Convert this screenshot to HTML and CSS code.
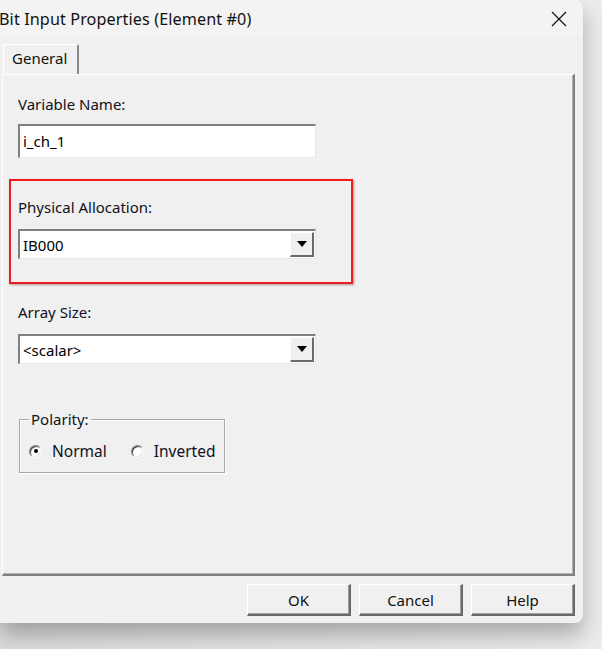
FILE: index.html
```html
<!DOCTYPE html>
<html>
<head>
<meta charset="utf-8">
<link rel="stylesheet" href="styles.css">
</head>
<body>
<div class="window">
  <div class="titlebar">
    <span class="title">Bit Input Properties (Element #0)</span>
    <svg class="close" width="16" height="16" viewBox="0 0 16 16"><path d="M1 1 L15 15 M15 1 L1 15" stroke="#111" stroke-width="1.2" fill="none"/></svg>
  </div>
  <div class="tabs">
    <div class="tab">General</div>
  </div>
  <div class="panel">
    <div class="label l1">Variable Name:</div>
    <div class="edit">i_ch_1</div>
    <div class="label l2">Physical Allocation:</div>
    <div class="combo"><span class="val">IB000</span><span class="arrow"><svg width="10" height="6" viewBox="0 0 10 6"><path d="M0 0 H10 L5 6 Z" fill="#000"/></svg></span></div>
    <div class="label l3">Array Size:</div>
    <div class="combo"><span class="val">&lt;scalar&gt;</span><span class="arrow"><svg width="10" height="6" viewBox="0 0 10 6"><path d="M0 0 H10 L5 6 Z" fill="#000"/></svg></span></div>
    <fieldset class="group">
      <legend>Polarity:</legend>
      <div class="radios">
        <label class="radio"><span class="circle checked"></span>Normal</label>
        <label class="radio"><span class="circle"></span>Inverted</label>
      </div>
    </fieldset>
    <div class="highlight"></div>
  </div>
  <div class="buttons">
    <div class="btn">OK</div>
    <div class="btn">Cancel</div>
    <div class="btn">Help</div>
  </div>
</div>
</body>
</html>
```
FILE: styles.css
```css
html, body { margin: 0; padding: 0; }
body {
  width: 602px; height: 649px; overflow: hidden;
  background: linear-gradient(90deg, #dcdcdc, #ececec);
  font-family: "Noto Sans", "Liberation Sans", sans-serif;
}
.window {
  width: 583px; height: 623px;
  background: #f0f0f0;
  border-radius: 0 8px 8px 0;
  box-shadow: 0 12px 22px rgba(0,0,0,0.28);
  display: flex; flex-direction: column;
  position: relative;
}
.titlebar {
  height: 37px; flex: none;
  background: #f3f3f3;
  border-radius: 0 8px 0 0;
  display: flex; align-items: center; justify-content: space-between;
  padding: 0 16px 0 0;
}
.title {
  font-family: "Noto Sans", sans-serif; font-size: 16.2px; color: #111;
  margin-left: -1px; letter-spacing: 0.1px;
}
.tabs { height: 37px; flex: none; display: flex; align-items: flex-end; padding-left: 3px; }
.tab {
  width: 76px; height: 31px; box-sizing: border-box;
  border-top: 1px solid #fff; border-left: 1px solid #fff;
  border-right: 2px solid #8a8a8a;
  border-radius: 2px 2px 0 0;
  font-size: 15px; color: #111; line-height: 20px;
  padding: 3px 0 0 8px;
  position: relative; top: 1px;
}
.panel {
  margin-left: 2px; width: 573px; height: 502px; box-sizing: border-box;
  border-top: 1px solid #fff; border-left: 1px solid #fff;
  border-right: 2px solid #808080; border-bottom: 2px solid #808080;
  box-shadow: inset -1px -1px 0 #b4b4b4;
  padding: 21px 0 0 15px;
  position: relative;
  display: flex; flex-direction: column; align-items: flex-start;
}
.label { font-size: 15px; line-height: 16px; height: 16px; color: #10101a; }
.l2 { margin-top: 41px; }
.l3 { margin-top: 45px; }
.edit {
  margin-top: 12px;
  width: 298px; height: 34px; box-sizing: border-box;
  background: #fff;
  border-style: solid; border-width: 2px 1px 1px 2px;
  border-color: #808080 #e8e8e8 #e8e8e8 #808080;
  padding: 0 0 0 3px; line-height: 30px;
  font-size: 15px; color: #000;
}
.combo {
  margin-top: 14px;
  width: 298px; height: 30px; box-sizing: border-box;
  background: #fff;
  border-style: solid; border-width: 2px 1px 1px 2px;
  border-color: #808080 #e8e8e8 #e8e8e8 #808080;
  display: flex; align-items: center; justify-content: space-between;
  padding: 0 1px 0 2px;
  font-size: 15px; color: #000;
}
.combo .val { padding-left: 1px; }
.arrow {
  width: 24px; height: 25px; box-sizing: border-box;
  background: #f0f0f0;
  border-style: solid; border-width: 1px 2px 2px 1px;
  border-color: #fff #6a6a6a #6a6a6a #fff;
  display: flex; align-items: center; justify-content: center;
}
.group {
  margin: 47px 0 0 1px;
  width: 206px; height: 62px; box-sizing: border-box;
  border: 1px solid #a8a8a8;
  box-shadow: 1px 1px 0 #fff, inset 1px 1px 0 #fff;
  padding: 0 0 0 9px;
}
.group legend {
  font-size: 15px; line-height: 16px; color: #10101a; padding: 0 2px; margin-left: 0;
}
.radios { display: flex; gap: 24px; margin-top: 15px; }
.radio { display: flex; align-items: center; font-size: 15.5px; line-height: 18px; color: #10101a; }
.circle {
  width: 13px; height: 13px; box-sizing: border-box;
  border-radius: 50%;
  border: 1px solid; border-color: #808080 #fff #fff #808080;
  background: #fff;
  box-shadow: inset 1px 1px 0 #404040, inset -1px -1px 0 #e0e0e0;
  margin-right: 10px;
  display: flex; align-items: center; justify-content: center;
}
.circle.checked::after {
  content: ""; width: 4px; height: 4px; border-radius: 50%; background: #000;
}
.highlight {
  position: absolute; left: 6px; top: 104px;
  width: 344px; height: 105px; box-sizing: border-box;
  border: 2px solid #ee1c1c;
  box-shadow: 1px 1px 2px rgba(0,0,0,0.35);
}
.buttons {
  display: flex; justify-content: flex-end; gap: 8px;
  width: 575px; margin-top: 8px;
}
.btn {
  width: 104px; height: 32px; box-sizing: border-box;
  border-style: solid; border-width: 1px 2px 2px 1px;
  border-color: #fff #6a6a6a #6a6a6a #fff;
  box-shadow: inset -1px -1px 0 #a0a0a0;
  font-size: 15px; color: #111;
  display: flex; align-items: center; justify-content: center;
}
```
